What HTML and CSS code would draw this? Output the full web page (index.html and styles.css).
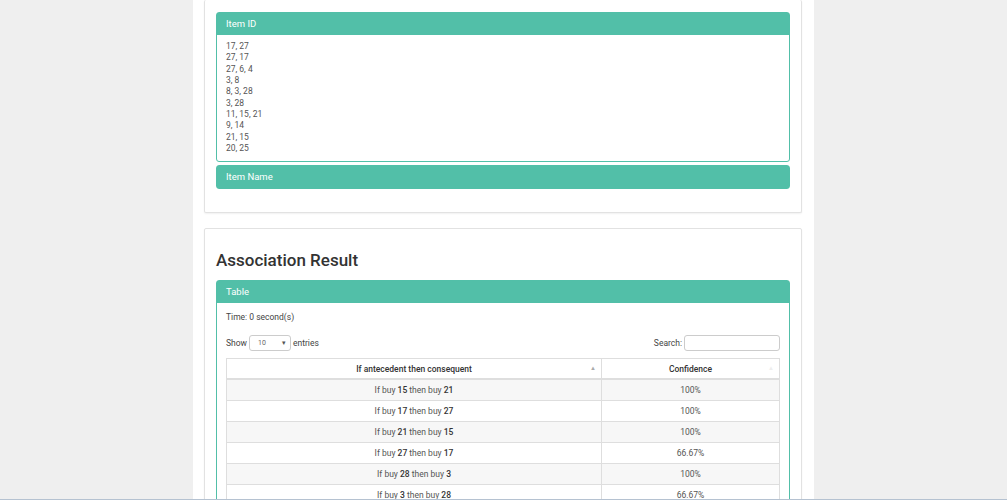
FILE: index.html
```html
<!DOCTYPE html>
<html>
<head>
<meta charset="utf-8">
<link rel="stylesheet" href="styles.css">
</head>
<body>
<div class="wrap">
  <div class="card card-first">
    <div class="panel">
      <div class="panel-head">Item ID</div>
      <div class="panel-body list">
        <div>17, 27</div>
        <div>27, 17</div>
        <div>27, 6, 4</div>
        <div>3, 8</div>
        <div>8, 3, 28</div>
        <div>3, 28</div>
        <div>11, 15, 21</div>
        <div>9, 14</div>
        <div>21, 15</div>
        <div>20, 25</div>
      </div>
    </div>
    <div class="panel panel-closed">
      <div class="panel-head">Item Name</div>
    </div>
  </div>

  <div class="card">
    <h2 class="title">Association Result</h2>
    <div class="panel">
      <div class="panel-head">Table</div>
      <div class="panel-body tbody-wrap">
        <div class="time">Time: 0 second(s)</div>
        <div class="controls">
          <div class="length">Show <span class="select"><span>10</span><span class="caret">▾</span></span> entries</div>
          <div class="search">Search: <span class="input"></span></div>
        </div>
        <table class="dt">
          <thead>
            <tr><th class="c1">If antecedent then consequent<span class="sort on">▲</span></th><th class="c2">Confidence<span class="sort">▲</span></th></tr>
          </thead>
          <tbody>
            <tr><td>If buy <b>15</b> then buy <b>21</b></td><td>100%</td></tr>
            <tr><td>If buy <b>17</b> then buy <b>27</b></td><td>100%</td></tr>
            <tr><td>If buy <b>21</b> then buy <b>15</b></td><td>100%</td></tr>
            <tr><td>If buy <b>27</b> then buy <b>17</b></td><td>66.67%</td></tr>
            <tr><td>If buy <b>28</b> then buy <b>3</b></td><td>100%</td></tr>
            <tr><td>If buy <b>3</b> then buy <b>28</b></td><td>66.67%</td></tr>
          </tbody>
        </table>
      </div>
    </div>
  </div>
</div>
<div class="edge"></div>
</body>
</html>
```
FILE: styles.css
```css
html, body {
  margin: 0;
  padding: 0;
  background: #efefef;
  font-family: Roboto, "Liberation Sans", sans-serif;
  color: #333;
  overflow: hidden;
}
.wrap {
  width: 598px;
  margin: 0 auto;
  padding: 0 12px 0 11px;
  background: #fff;
  min-height: 100vh;
}
.card {
  background: #fff;
  border: 1px solid #e2e2e2;
  border-radius: 2px;
  box-shadow: 0 1px 2px rgba(0,0,0,0.06);
  padding: 11px 11px 12px;
  margin-bottom: 15px;
}
.card-first {
  border-top: none;
  padding-top: 12px;
  padding-bottom: 11px;
}
.panel {
  border: 1px solid #52bfa8;
  border-radius: 3px;
  margin-bottom: 3px;
  background: #fff;
}
.panel-closed {
  margin-bottom: 12px;
}
.panel-head {
  background: #52bfa8;
  color: #fff;
  font-size: 9.5px;
  line-height: 12px;
  padding: 5px 9px 5px;
}
.panel-body {
  padding: 6px 9px 7px;
  font-size: 8.5px;
  color: #555;
}
.list div {
  line-height: 11.33px;
}
.title {
  font-size: 17px;
  font-weight: 500;
  line-height: 24px;
  margin: 8px 0 8px 0;
  color: #333;
}
.tbody-wrap {
  padding: 8px 9px 0;
}
.time {
  font-size: 8.5px;
  line-height: 12px;
  color: #444;
}
.controls {
  margin-top: 12px;
  display: flex;
  justify-content: space-between;
  align-items: center;
  font-size: 8.5px;
  color: #444;
  height: 16px;
}
.length, .search {
  display: flex;
  align-items: center;
  gap: 2px;
}
.select {
  box-sizing: border-box;
  width: 42px;
  height: 16px;
  border: 1px solid #ccc;
  border-radius: 3px;
  display: inline-flex;
  justify-content: space-between;
  align-items: center;
  padding: 0 4px 0 8px;
  font-size: 7px;
  color: #666;
}
.caret {
  font-size: 7px;
  color: #555;
}
.input {
  box-sizing: border-box;
  display: inline-block;
  width: 96px;
  height: 16px;
  border: 1px solid #ccc;
  border-radius: 3px;
}
.dt {
  margin-top: 7px;
  width: 554px;
  border-collapse: collapse;
  font-size: 8.5px;
  color: #555;
}
.dt th {
  position: relative;
  height: 19px;
  border: 1px solid #dedede;
  border-bottom: 2px solid #dedede;
  font-weight: 500;
  font-size: 8.5px;
  color: #333;
  padding: 0;
}
.dt .c1 { width: 374px; }
.sort {
  position: absolute;
  right: 5px;
  top: 5px;
  font-size: 6px;
  color: #aaa;
}
.sort:not(.on) { color: #eee; }
.dt td {
  height: 20px;
  border: 1px solid #dedede;
  text-align: center;
  padding: 0;
}
.dt td b { color: #333; font-weight: 500; }
.dt tbody tr:nth-child(odd) td { background: #f7f7f7; }
.edge {
  position: fixed;
  left: 0;
  right: 0;
  bottom: 0;
  height: 1px;
  background: #b5c2d1;
}
```
